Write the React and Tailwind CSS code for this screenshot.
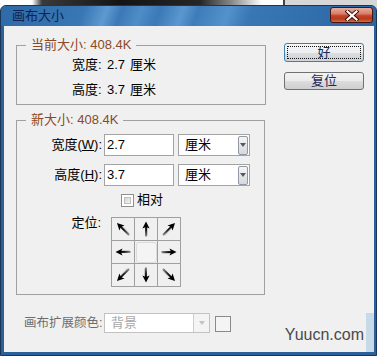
import React from "react";

const F = "font-['Liberation_Sans','Noto_Sans_CJK_SC',sans-serif]";

function Arrow({ rot, len = 14, id }) {
  const tip = 11 - len / 2;
  const tail = 11 + len / 2;
  return (
    <svg width="22" height="22" viewBox="0 0 22 22">
      <defs>
        <linearGradient id={id} x1="0" y1={tip} x2="0" y2={tail} gradientUnits="userSpaceOnUse">
          <stop offset="0" stopColor="#000" />
          <stop offset="0.55" stopColor="#111" />
          <stop offset="1" stopColor="#888" />
        </linearGradient>
      </defs>
      <g transform={`rotate(${rot} 11 11)`}>
        <rect x="10.1" y={tip + 4} width="1.9" height={len - 4} fill={`url(#${id})`} />
        <rect x="12" y={tip + 6} width="0.9" height={len - 7} fill="#c4c4c4" />
        <polygon points={`11,${tip} 7.4,${tip + 7} 11,${tip + 5.5} 14.6,${tip + 7}`} fill="#000" />
      </g>
    </svg>
  );
}

function Select({ label }) {
  return (
    <div className="flex items-center w-[72px] h-[22px] border border-[#a3a3a3] bg-white ml-[4px]">
      <div className="flex-1 pl-[6px] text-[13px] leading-[14px] text-black">{label}</div>
      <div className="w-[10px] h-[19px] mr-[1px] border border-[#8f98a3] rounded-[2px] bg-[linear-gradient(to_bottom,#f4f5f6,#d5d9de)] flex items-center justify-center">
        <svg width="6" height="4" viewBox="0 0 6 4"><polygon points="0,0 6,0 3,4" fill="#505a66" /></svg>
      </div>
    </div>
  );
}

export default function App() {
  return (
    <div className={`w-[377px] h-[356px] overflow-hidden pt-[5px] ${F} bg-[linear-gradient(to_right,#ffffff_0px,#ffffff_32px,#3a3a3a_42px,#141414_120px,#262626_200px,#8a8a8a_232px,#ffffff_262px,#ffffff_283px,#444444_283px,#444444_285px,#d6d6d6_285px)]`}>
      <div className="h-[351px] flex flex-col rounded-t-[6px] border border-[#1b3556] bg-[#2b609a] overflow-hidden">
        {/* title bar */}
        <div className="h-[20px] flex items-start justify-between pl-[11px] pr-[3px] bg-[linear-gradient(110deg,#2e6aa8_0%,#3876b4_22%,#5e99d0_28%,#3b78b6_32%,#4f8dc8_37%,#3b79b7_42%,#5b97cf_48%,#3e7cb9_52%,#5492cb_60%,#3876b4_66%,#316dab_85%,#2c66a2_100%)]">
          <div className="h-[20px] flex items-center text-[13px] leading-[14px] text-[#0f2350]">画布大小</div>
          <div className="mt-[1px] w-[43px] h-[16px] rounded-[3px] border border-[#4a1410] bg-[linear-gradient(to_bottom,#e8aa9a_0%,#d9806c_40%,#c2442a_55%,#b83a1c_78%,#d2703e_100%)] flex items-center justify-center">
            <svg width="14" height="11" viewBox="0 0 14 11">
              <path d="M2.5 1.5 L11.5 9.5 M11.5 1.5 L2.5 9.5" stroke="#3a0c04" strokeWidth="4" strokeLinecap="square" />
              <path d="M2.5 1.5 L11.5 9.5 M11.5 1.5 L2.5 9.5" stroke="#ffffff" strokeWidth="2.2" strokeLinecap="square" />
            </svg>
          </div>
        </div>
        {/* client frame */}
        <div className="flex-1 pl-[3px] pr-[2px] pb-[3px]">
          <div className="h-full bg-[#f0f0f0] flex flex-col text-black">
            <div className="flex pl-[12px]">
              {/* left column */}
              <div className="pt-[19px] flex flex-col">
                <div className="relative w-[250px] h-[60px] border border-[#a0a0a0] pt-[12px] pl-[55px] text-[13px] leading-[14px]">
                  <span className="absolute -top-[8px] left-[9px] px-[5px] bg-[#f0f0f0] text-[#8b4a24]">当前大小: 408.4K</span>
                  <div className="flex"><span className="w-[35px]">宽度:</span><span>2.7</span><span className="ml-[5px]">厘米</span></div>
                  <div className="flex mt-[11px]"><span className="w-[35px]">高度:</span><span>3.7</span><span className="ml-[5px]">厘米</span></div>
                </div>
                <div className="relative mt-[15px] w-[249px] h-[175px] border border-[#a0a0a0] pt-[13px] text-[13px] leading-[14px]">
                  <span className="absolute -top-[8px] left-[9px] px-[5px] bg-[#f0f0f0] text-[#8b4a24]">新大小: 408.4K</span>
                  <div className="flex items-center">
                    <div className="w-[85px] text-right">宽度(<span className="underline">W</span>):</div>
                    <div className="ml-[2px] w-[70px] h-[22px] border border-[#a3a3a3] bg-white flex items-center pl-[2px]">2.7</div>
                    <Select label="厘米" />
                  </div>
                  <div className="flex items-center mt-[8px]">
                    <div className="w-[85px] text-right">高度(<span className="underline">H</span>):</div>
                    <div className="ml-[2px] w-[70px] h-[22px] border border-[#a3a3a3] bg-white flex items-center pl-[2px]">3.7</div>
                    <Select label="厘米" />
                  </div>
                  <div className="flex items-center mt-[7px] pl-[104px]">
                    <div className="w-[13px] h-[13px] border border-[#8e8f8f] bg-white p-[2px]">
                      <div className="w-full h-full border border-[#bfbfbf] bg-[linear-gradient(135deg,#d4d4d4,#f6f6f6)]" />
                    </div>
                    <span className="ml-[3px]">相对</span>
                  </div>
                  <div className="flex items-start mt-[10px]">
                    <div className="w-[84px] text-right -mt-[1px]">定位:</div>
                    <div className="ml-[10px] grid grid-cols-[repeat(3,22px)] grid-rows-[repeat(3,22px)] gap-px bg-[#a0a0a0] border border-[#a0a0a0]">
                      <div className="bg-[#f0f0f0]"><Arrow id="a1" rot={-45} len={17} /></div>
                      <div className="bg-[#f0f0f0]"><Arrow id="a2" rot={0} len={15} /></div>
                      <div className="bg-[#f0f0f0]"><Arrow id="a3" rot={45} len={17} /></div>
                      <div className="bg-[#f0f0f0]"><Arrow id="a4" rot={-90} len={15} /></div>
                      <div className="bg-[#f0f0f0] flex items-center justify-center">
                        <div className="w-[21px] h-[21px] rounded-[3px] border border-[#dcdcdc] bg-[#f4f4f4]" />
                      </div>
                      <div className="bg-[#f0f0f0]"><Arrow id="a6" rot={90} len={15} /></div>
                      <div className="bg-[#f0f0f0]"><Arrow id="a7" rot={-135} len={17} /></div>
                      <div className="bg-[#f0f0f0]"><Arrow id="a8" rot={180} len={15} /></div>
                      <div className="bg-[#f0f0f0]"><Arrow id="a9" rot={135} len={17} /></div>
                    </div>
                  </div>
                </div>
              </div>
              {/* right column */}
              <div className="ml-[18px] pt-[17px] flex flex-col text-[13px] leading-[12px] text-[#1b2a5c]">
                <div className="w-[80px] h-[19px] rounded-[3px] border border-[#3c7fb1] p-[2px] flex bg-[linear-gradient(to_bottom,#f4f6f8_0%,#eceef0_50%,#dcdfe2_50%,#cfd2d6_100%)]">
                  <div className="flex-1 border border-dotted border-[#111] flex items-center justify-center">好</div>
                </div>
                <div className="mt-[10px] w-[80px] h-[18px] rounded-[3px] border border-[#707070] flex items-center justify-center bg-[linear-gradient(to_bottom,#f2f2f2_0%,#ebebeb_50%,#dddddd_50%,#cfcfcf_100%)]">复位</div>
              </div>
            </div>
            {/* bottom row */}
            <div className="mt-[18px] flex items-start pl-[20px]">
              <div className="h-[20px] w-[80px] flex items-center whitespace-nowrap text-[12.5px] text-[#6d6d6d]">画布扩展颜色:</div>
              <div className="w-[106px] h-[20px] border border-[#c2c2c2] bg-white flex items-center">
                <div className="flex-1 pl-[6px] text-[13px] text-[#a8a8a8]">背景</div>
                <div className="w-[16px] h-[18px] border-l border-[#cfcfcf] bg-[#f4f4f4] flex items-center justify-center">
                  <svg width="6" height="4" viewBox="0 0 6 4"><polygon points="0,0 6,0 3,4" fill="#c4c4c4" /></svg>
                </div>
              </div>
              <div className="ml-[5px] mt-[3px] w-[16px] h-[16px] border border-[#8a8a8a] bg-[#f4f4f4]" />
              <div className="ml-auto mt-[13px] text-[16px] leading-[18px] text-[#4a4a4a]">Yuucn.com</div>
              <div className="ml-[2px] w-[8px] h-[39px] bg-[#c6dbe7]" />
            </div>
          </div>
        </div>
      </div>
    </div>
  );
}
